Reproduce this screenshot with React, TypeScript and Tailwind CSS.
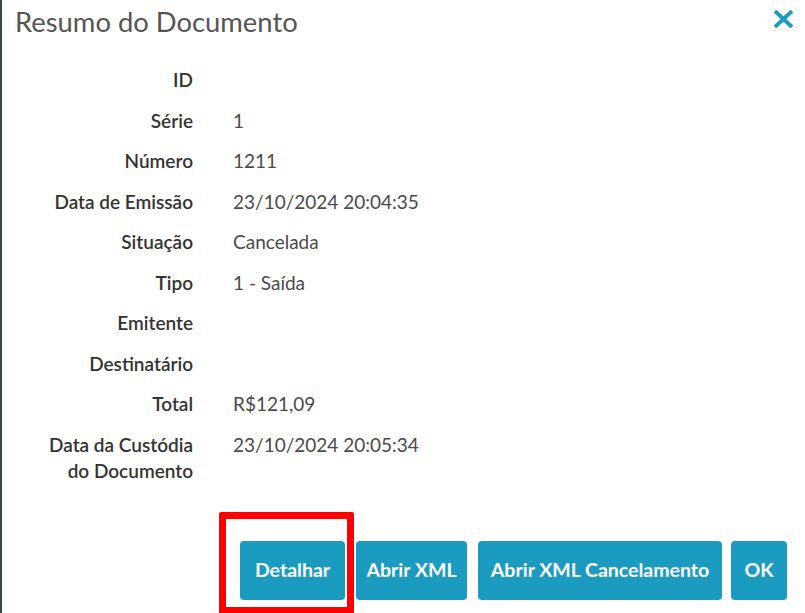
import React from 'react';

const rows: { label: string; value: string }[] = [
  { label: 'ID', value: '' },
  { label: 'Série', value: '1' },
  { label: 'Número', value: '1211' },
  { label: 'Data de Emissão', value: '23/10/2024 20:04:35' },
  { label: 'Situação', value: 'Cancelada' },
  { label: 'Tipo', value: '1 - Saída' },
  { label: 'Emitente', value: '' },
  { label: 'Destinatário', value: '' },
  { label: 'Total', value: 'R$121,09' },
  { label: 'Data da Custódia do Documento', value: '23/10/2024 20:05:34' },
];

const App: React.FC = () => {
  return (
    <div
      className="w-[805px] h-[613px] bg-white border-l-2 border-[#37474f] overflow-hidden flex flex-col"
      style={{ fontFamily: 'Lato, "Open Sans", sans-serif' }}
    >
      <div className="flex items-center justify-between pl-[13px] pr-[11px] h-[44px]">
        <h1 className="text-[27.4px] text-[#555] font-normal">Resumo do Documento</h1>
        <button className="text-[#1a9bc0] self-start mt-[10px]">
          <svg width="21" height="18" viewBox="0 0 21 18">
            <path d="M2 1 L19 17 M19 1 L2 17" stroke="currentColor" strokeWidth="3.8" strokeLinecap="butt" />
          </svg>
        </button>
      </div>

      <div className="mt-[16px] flex flex-col">
        {rows.map(r => (
          <div key={r.label} className="flex py-[7px] leading-[26.5px]">
            <div className="w-[150px] ml-[41px] text-right text-[19px] font-semibold text-[#333]">{r.label}</div>
            <div className="ml-[40px] text-[19px] text-[#4a4a4a]">{r.value}</div>
          </div>
        ))}
      </div>

      <div className="flex ml-[238px] mt-[49px]">
        <div className="relative">
          <button className="h-[59px] w-[105px] rounded-[4px] bg-[#1a9bbf] text-white font-bold text-[19.5px]">Detalhar</button>
          <div className="absolute left-[-21px] top-[-29px] w-[135px] h-[102px] border-[7px] border-[#ff0000] rounded-[2px] pointer-events-none" />
        </div>
        <button className="ml-[11px] h-[59px] w-[111px] rounded-[4px] bg-[#1a9bbf] text-white font-bold text-[19.5px]">Abrir XML</button>
        <button className="ml-[11px] h-[59px] w-[244px] rounded-[4px] bg-[#1a9bbf] text-white font-bold text-[19.5px]">Abrir XML Cancelamento</button>
        <button className="ml-[9px] h-[59px] w-[56px] rounded-[4px] bg-[#1a9bbf] text-white font-bold text-[19.5px]">OK</button>
      </div>
    </div>
  );
};

export default App;
